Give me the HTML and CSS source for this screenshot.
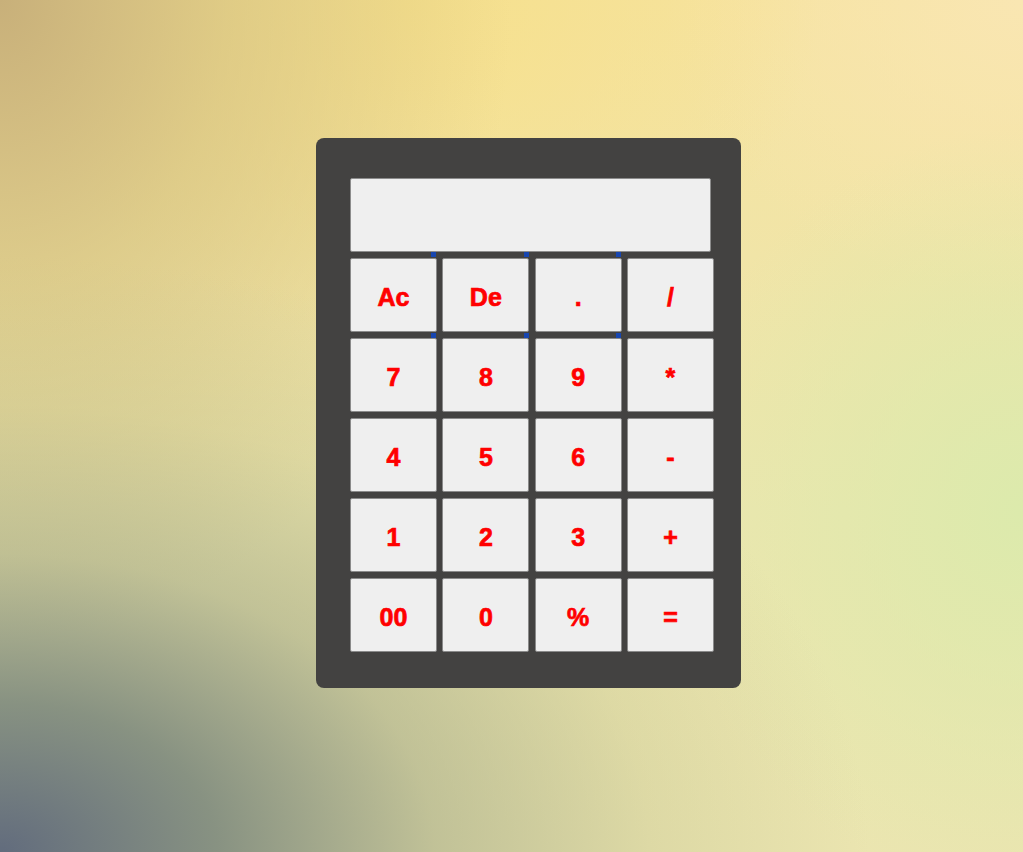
FILE: index.html
```html
<!DOCTYPE html>
<html lang="en">
<head>
<meta charset="utf-8">
<title>Calculator</title>
<link rel="stylesheet" href="styles.css">
</head>
<body>
  <div class="calculator">
    <input class="display" type="text" readonly>
    <div class="keypad">
      <span class="mark m1"></span><span class="mark m2"></span><span class="mark m3"></span>
      <span class="mark m4"></span><span class="mark m5"></span><span class="mark m6"></span>
      <button class="key">Ac</button>
      <button class="key">De</button>
      <button class="key">.</button>
      <button class="key">/</button>
      <button class="key">7</button>
      <button class="key">8</button>
      <button class="key">9</button>
      <button class="key">*</button>
      <button class="key">4</button>
      <button class="key">5</button>
      <button class="key">6</button>
      <button class="key">-</button>
      <button class="key">1</button>
      <button class="key">2</button>
      <button class="key">3</button>
      <button class="key">+</button>
      <button class="key">00</button>
      <button class="key">0</button>
      <button class="key">%</button>
      <button class="key">=</button>
    </div>
  </div>
</body>
</html>
```

FILE: styles.css
```css
html, body {
  margin: 0;
  height: 100%;
}

body {
  box-sizing: border-box;
  padding: 138px 0 0 316px;
  font-family: "Liberation Sans", Arial, sans-serif;
  background-color: #efe6a8;
  background-image:
    radial-gradient(ellipse 85% 70% at 0% 100%, rgba(98, 108, 125, 1) 0%, rgba(125, 137, 125, 0.9) 25%, rgba(165, 170, 135, 0.6) 50%, rgba(190, 190, 140, 0.3) 75%, rgba(210, 205, 150, 0) 100%),
    radial-gradient(ellipse 50% 75% at 0% 0%, rgba(200, 176, 122, 1) 0%, rgba(212, 192, 125, 0.65) 45%, rgba(228, 212, 135, 0) 100%),
    radial-gradient(ellipse 40% 40% at 40% 0%, rgba(246, 224, 140, 1) 0%, rgba(246, 226, 150, 0) 100%),
    radial-gradient(ellipse 35% 45% at 100% 60%, rgba(220, 234, 172, 1) 0%, rgba(224, 232, 175, 0) 100%),
    radial-gradient(ellipse 35% 35% at 100% 0%, rgba(249, 230, 178, 1) 0%, rgba(249, 230, 178, 0) 100%),
    linear-gradient(180deg, #f6e3a0 0%, #ece6ae 60%, #ebe5b0 100%);
}

.calculator {
  box-sizing: border-box;
  width: 425px;
  height: 550px;
  padding: 40px 26px 0 34px;
  background: #434241;
  border-radius: 8px;
  display: flex;
  flex-direction: column;
  gap: 6px;
}

.display {
  box-sizing: border-box;
  width: 361px;
  height: 74px;
  margin: 0;
  padding: 0 8px;
  border: 1px solid #8c8c8c;
  border-radius: 2px;
  background: #efefef;
  font-family: inherit;
  font-size: 28px;
  text-align: right;
  outline: none;
}

.keypad {
  position: relative;
  display: grid;
  grid-template-columns: repeat(4, 87px);
  grid-auto-rows: 74px;
  column-gap: 5.33px;
  row-gap: 6px;
}

.key {
  margin: 0;
  padding: 4px 0 0;
  border: 1px solid #8a8a8a;
  border-radius: 2px;
  background: #efefef;
  color: #ff0000;
  font-family: "Liberation Sans", Arial, sans-serif;
  font-weight: 700;
  font-size: 25px;
  line-height: 1;
  -webkit-text-stroke: 0.7px #ff0000;
  cursor: pointer;
}

.mark {
  position: absolute;
  width: 5px;
  height: 5px;
  background: #1846b0;
}

.m1 { left: 81px; top: -6px; }
.m2 { left: 174px; top: -6px; }
.m3 { left: 266px; top: -6px; }
.m4 { left: 81px; top: 75px; }
.m5 { left: 174px; top: 75px; }
.m6 { left: 266px; top: 75px; }
```
